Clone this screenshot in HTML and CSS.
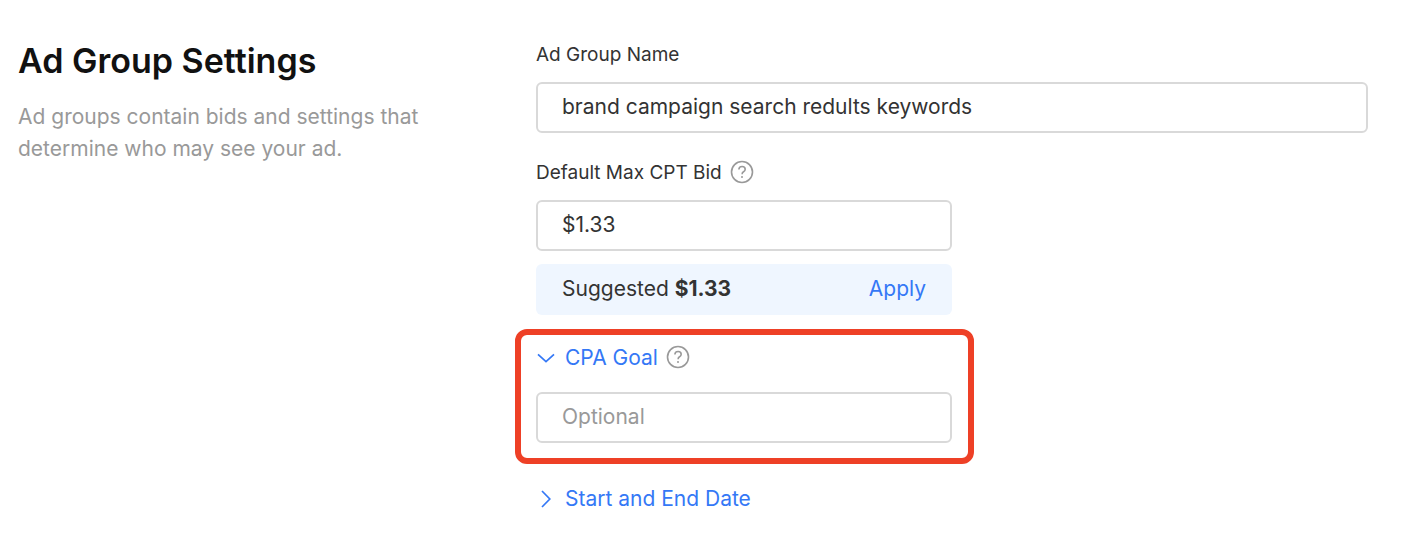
FILE: index.html
```
<!DOCTYPE html>
<html lang="en">
<head>
    <meta charset="UTF-8">
    <meta name="viewport" content="width=device-width, initial-scale=1.0">
    <title>Ad Group Settings</title>
    <link rel="stylesheet" href="styles.css">
</head>
<body>

    <main class="settings">
        <!-- Section intro -->
        <header class="intro">
            <h1>Ad Group Settings</h1>
            <p>Ad groups contain bids and settings that determine who may see your ad.</p>
        </header>

        <!-- Form -->
        <form class="form">
            <div class="field">
                <div class="label-row">
                    <label for="groupName">Ad Group Name</label>
                </div>
                <input type="text" id="groupName" value="brand campaign search redults keywords">
            </div>

            <div class="field half">
                <div class="label-row">
                    <label for="maxBid">Default Max CPT Bid</label>
                    <button type="button" class="help" aria-label="About max CPT bid">
                        <svg width="24" height="24" viewBox="0 0 24 24">
                            <circle cx="12" cy="12" r="10.5"/>
                            <path d="M8.9 9.5C8.9 7.6 10.2 6.5 12.1 6.5s3.1 1.1 3.1 2.8c0 1.3-.8 1.9-1.7 2.5-1 .6-1.4 1.1-1.4 2.4"/>
                            <circle class="dot" cx="12" cy="17" r="1"/>
                        </svg>
                    </button>
                </div>
                <input type="text" id="maxBid" value="$1.33">
            </div>

            <div class="suggestion half">
                <span>Suggested <strong>$1.33</strong></span>
                <button type="button" class="link">Apply</button>
            </div>

            <div class="highlight">
                <div class="label-row">
                    <button type="button" class="link toggle" aria-expanded="true">
                        <svg width="20" height="20" viewBox="0 0 20 20"><path d="M2 6.3l8 7.4 8-7.4"/></svg>
                        <span id="cpaLabel">CPA Goal</span>
                    </button>
                    <button type="button" class="help" aria-label="About CPA goal">
                        <svg width="24" height="24" viewBox="0 0 24 24">
                            <circle cx="12" cy="12" r="10.5"/>
                            <path d="M8.9 9.5C8.9 7.6 10.2 6.5 12.1 6.5s3.1 1.1 3.1 2.8c0 1.3-.8 1.9-1.7 2.5-1 .6-1.4 1.1-1.4 2.4"/>
                            <circle class="dot" cx="12" cy="17" r="1"/>
                        </svg>
                    </button>
                </div>
                <input type="text" placeholder="Optional" aria-labelledby="cpaLabel">
            </div>

            <button type="button" class="link toggle" aria-expanded="false">
                <svg width="20" height="20" viewBox="0 0 20 20"><path d="M6 2l7.8 8L6 18"/></svg>
                <span>Start and End Date</span>
            </button>
        </form>
    </main>

</body>
</html>
```
FILE: styles.css
```
* {
    box-sizing: border-box;
}

body {
    margin: 0;
    background-color: #fff;
    color: #333;
    font-family: Inter, "Liberation Sans", sans-serif;
    font-size: 21px;
    line-height: 24px;
}

.settings {
    display: grid;
    grid-template-columns: 518px 1fr;
    padding: 42px 34px 26px 18px;
}

.intro h1 {
    margin: 0;
    color: #111;
    font-size: 34px;
    font-weight: 600;
    line-height: 38px;
}

.intro p {
    max-width: 420px;
    margin: 21px 0 0;
    color: #999;
    line-height: 32px;
}

.form {
    display: flex;
    flex-direction: column;
    align-items: flex-start;
}

.field {
    width: 100%;
    margin-bottom: 27px;
}

.half {
    width: 50%;
}

.field.half {
    margin-bottom: 13px;
}

.label-row {
    display: flex;
    align-items: center;
    gap: 8px;
    height: 26px;
    margin-bottom: 14px;
}

.label-row label {
    font-size: 19px;
}

input {
    display: block;
    width: 100%;
    height: 51px;
    padding: 0 24px 2px;
    border: 2px solid #d9d9d9;
    border-radius: 6px;
    background-color: #fff;
    color: #333;
    font: inherit;
}

input::placeholder {
    color: #999;
    opacity: 1;
}

button {
    padding: 0;
    border: none;
    background: none;
    font: inherit;
    cursor: pointer;
}

svg {
    display: block;
    fill: none;
    stroke: currentColor;
}

.help {
    margin-bottom: 2px;
    color: #999;
    stroke-width: 1.6;
}

.help .dot {
    fill: currentColor;
    stroke: none;
}

.link {
    color: #3478f6;
}

.toggle {
    display: flex;
    align-items: center;
    gap: 9px;
    stroke-width: 1.7;
}

.suggestion {
    display: flex;
    align-items: center;
    justify-content: space-between;
    height: 51px;
    padding: 0 26px 2px;
    border-radius: 6px;
    background-color: #eff6ff;
}

.suggestion strong {
    font-weight: 700;
}

/* Frame sits outside the field column so the input stays aligned */
.highlight {
    width: calc(50% + 43px);
    margin: 14px 0 23px -21px;
    padding: 10px 16px 15px 15px;
    border: 6px solid #ee4026;
    border-radius: 12px;
}

.highlight .label-row {
    margin-bottom: 21px;
}
```
